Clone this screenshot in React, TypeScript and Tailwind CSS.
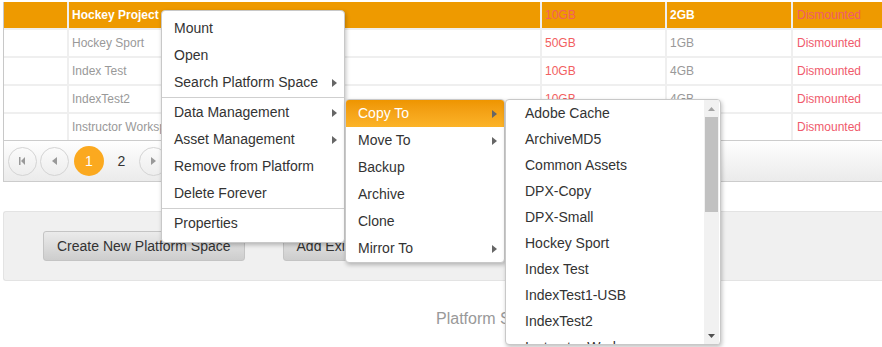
import React from "react";

const ROWS = [
  { name: "Hockey Project", size: "10GB", used: "2GB", status: "Dismounted", selected: true },
  { name: "Hockey Sport", size: "50GB", used: "1GB", status: "Dismounted" },
  { name: "Index Test", size: "10GB", used: "4GB", status: "Dismounted" },
  { name: "IndexTest2", size: "10GB", used: "4GB", status: "Dismounted" },
  { name: "Instructor Workspace", size: "10GB", used: "4GB", status: "Dismounted" },
];

const TARGETS = [
  "Adobe Cache",
  "ArchiveMD5",
  "Common Assets",
  "DPX-Copy",
  "DPX-Small",
  "Hockey Sport",
  "Index Test",
  "IndexTest1-USB",
  "IndexTest2",
  "Instructor Workspace",
];

function Caret({ color = "#666" }: { color?: string }) {
  return (
    <svg width="5" height="8" viewBox="0 0 5 8">
      <path d="M0 0L5 4L0 8Z" fill={color} />
    </svg>
  );
}

function MenuItem({ label, sub, active }: { label: string; sub?: boolean; active?: boolean }) {
  return (
    <div
      className={
        "h-[27px] flex items-center justify-between pl-[12px] pr-[7px] " +
        (active ? "bg-linear-to-b from-[#ee9500] to-[#fcb327] text-white" : "text-[#333]")
      }
    >
      <span>{label}</span>
      {sub && <Caret />}
    </div>
  );
}

function Divider() {
  return <div className="my-[1px] border-t border-[#cfcfcf]" />;
}

function PageBtn({ children }: { children: React.ReactNode }) {
  return (
    <div className="w-[29px] h-[29px] rounded-full border border-[#d4d4d4] flex items-center justify-center">
      {children}
    </div>
  );
}

export default function App() {
  return (
    <div className="relative w-[882px] h-[347px] overflow-hidden bg-white font-['Liberation_Sans',Arial,sans-serif]">
      <div className="pt-[2px]">
        {/* ── Table ── */}
        <div className="ml-[3px] border-l border-[#c8c8c8] bg-[#efefef] grid grid-cols-[63px_471px_123px_124px_1fr] gap-[2px] text-[12px]">
          {ROWS.map((r) => {
            const bg = r.selected ? "bg-[#ee9a00]" : "bg-white";
            return (
              <React.Fragment key={r.name}>
                <div className={"h-[26px] " + bg} />
                <div className={"h-[26px] flex items-center pl-[3px] " + bg + (r.selected ? " text-white font-bold" : " text-[#999]")}>
                  {r.name}
                </div>
                <div className={"h-[26px] flex items-center pl-[3px] text-[#f2605f] " + bg}>{r.size}</div>
                <div className={"h-[26px] flex items-center pl-[3px] " + bg + (r.selected ? " text-white font-bold" : " text-[#999]")}>
                  {r.used}
                </div>
                <div className={"h-[26px] flex items-center pl-1 text-[#f05a6c] " + bg}>{r.status}</div>
              </React.Fragment>
            );
          })}
        </div>

        {/* ── Pager ── */}
        <div className="ml-[3px] h-[42px] border border-r-0 border-[#cccccc] bg-linear-to-b from-[#fefefe] to-[#ebebeb] flex items-center pl-[4px] gap-[3px]">
          <PageBtn>
            <svg width="7" height="8" viewBox="0 0 7 8">
              <rect x="0" y="0" width="1.5" height="8" fill="#999" />
              <path d="M6 0L2 4L6 8Z" fill="#999" />
            </svg>
          </PageBtn>
          <PageBtn>
            <svg width="5" height="8" viewBox="0 0 5 8">
              <path d="M5 0L0 4L5 8Z" fill="#999" />
            </svg>
          </PageBtn>
          <div className="ml-[2px] w-[30px] h-[30px] rounded-full bg-[#fba91f] text-white text-[14px] flex items-center justify-center">
            1
          </div>
          <div className="w-[29px] h-[29px] text-[#333] text-[14px] flex items-center justify-center">2</div>
          <PageBtn>
            <svg width="5" height="8" viewBox="0 0 5 8">
              <path d="M0 0L5 4L0 8Z" fill="#999" />
            </svg>
          </PageBtn>
        </div>

        {/* ── Action panel ── */}
        <div className="ml-[3px] mt-[29px] h-[70px] border border-r-0 border-[#e3e3e3] rounded-l-[3px] bg-[#f0f0f0] flex items-center gap-[38px] pl-[39px]">
          <button className="h-[30px] px-[13px] rounded-[3px] border border-[#c4c4c4] bg-linear-to-b from-[#ebebeb] to-[#cdcdcd] text-[14px] text-[#333]">
            Create New Platform Space
          </button>
          <button className="h-[30px] px-[13px] rounded-[3px] border border-[#c4c4c4] bg-linear-to-b from-[#ebebeb] to-[#cdcdcd] text-[14px] text-[#333]">
            Add Existing Platform Space
          </button>
        </div>

        <div className="mt-[29px] pl-[436px] text-[16px] leading-[18px] text-[#999]">Platform Spaces</div>
      </div>

      {/* ── Context menu ── */}
      <div className="absolute left-[161px] top-[10px] w-[184px] bg-white border border-[#c8c8c8] rounded-[4px] shadow-[1px_2px_4px_rgba(0,0,0,0.25)] pt-[4px] pb-[5px] text-[14px] z-10">
        <MenuItem label="Mount" />
        <MenuItem label="Open" />
        <MenuItem label="Search Platform Space" sub />
        <Divider />
        <MenuItem label="Data Management" sub />
        <MenuItem label="Asset Management" sub />
        <MenuItem label="Remove from Platform" />
        <MenuItem label="Delete Forever" />
        <Divider />
        <MenuItem label="Properties" />
      </div>

      {/* ── Data management submenu ── */}
      <div className="absolute left-[345px] top-[99px] w-[160px] bg-white border border-[#c8c8c8] rounded-[4px] overflow-hidden shadow-[1px_2px_4px_rgba(0,0,0,0.25)] text-[14px] z-20">
        <MenuItem label="Copy To" sub active />
        <MenuItem label="Move To" sub />
        <MenuItem label="Backup" />
        <MenuItem label="Archive" />
        <MenuItem label="Clone" />
        <MenuItem label="Mirror To" sub />
      </div>

      {/* ── Copy target list ── */}
      <div className="absolute left-[505px] top-[99px] w-[216px] h-[246px] bg-white border border-[#c8c8c8] rounded-[4px] overflow-hidden shadow-[1px_2px_4px_rgba(0,0,0,0.25)] text-[14px] z-30 flex">
        <div className="flex-1 overflow-hidden">
          {TARGETS.map((t) => (
            <div key={t} className="h-[26px] flex items-center pl-[19px] text-[#333]">
              {t}
            </div>
          ))}
        </div>
        <div className="w-[15px] mr-[1px] bg-[#f1f1f1] flex flex-col items-center">
          <div className="h-[17px] flex items-center justify-center">
            <svg width="7" height="4" viewBox="0 0 7 4">
              <path d="M0 4L3.5 0L7 4Z" fill="#a3a3a3" />
            </svg>
          </div>
          <div className="w-[13px] h-[95px] bg-[#c1c1c1]" />
          <div className="flex-1" />
          <div className="h-[17px] flex items-center justify-center">
            <svg width="7" height="4" viewBox="0 0 7 4">
              <path d="M0 0L3.5 4L7 0Z" fill="#505050" />
            </svg>
          </div>
        </div>
      </div>
    </div>
  );
}
